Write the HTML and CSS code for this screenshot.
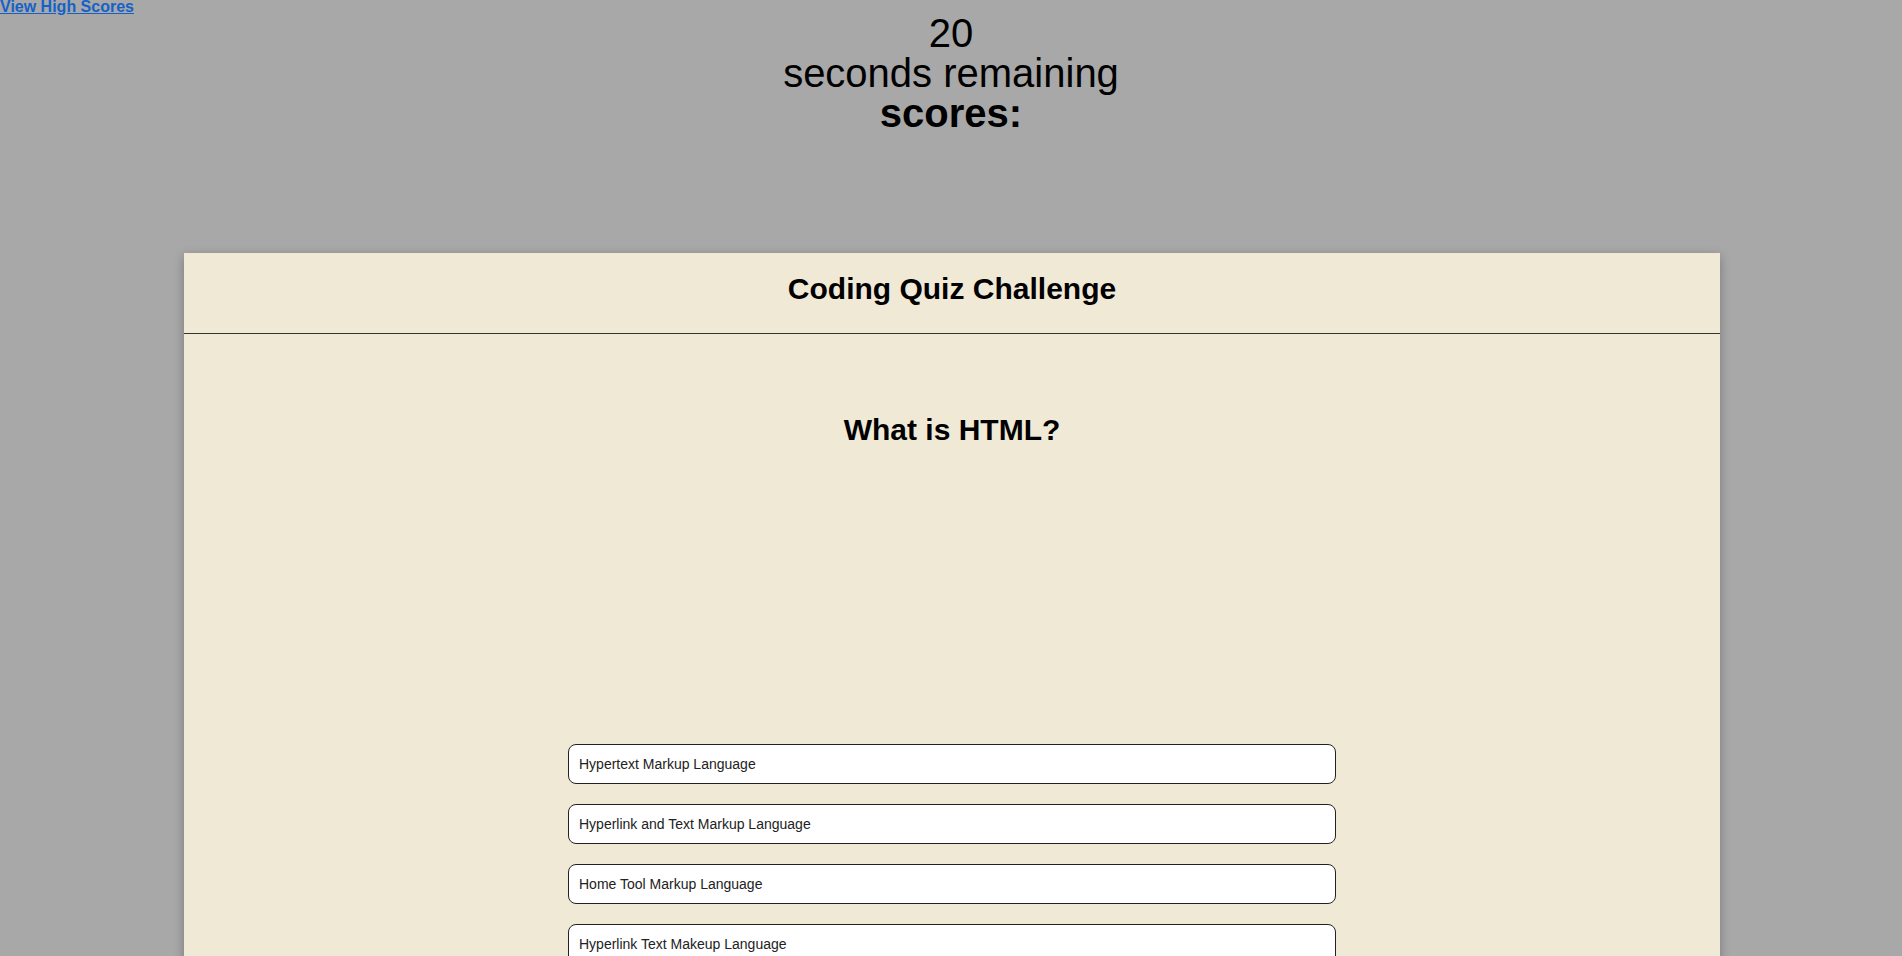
FILE: index.html
```html
<!DOCTYPE html>
<html>
<head>
<meta charset="utf-8">
<title>Coding Quiz Challenge</title>
<link rel="stylesheet" href="styles.css">
</head>
<body>
<header class="top">
  <a class="highscores" href="#">View High Scores</a>
  <div class="timer">
    <div class="time">20</div>
    <div class="label">seconds remaining</div>
    <div class="scores">scores:</div>
  </div>
</header>
<main class="card">
  <div class="card-head">
    <h1 class="title">Coding Quiz Challenge</h1>
  </div>
  <section class="quiz">
    <h2 class="question">What is HTML?</h2>
    <div class="answers">
      <button class="answer">Hypertext Markup Language</button>
      <button class="answer">Hyperlink and Text Markup Language</button>
      <button class="answer">Home Tool Markup Language</button>
      <button class="answer">Hyperlink Text Makeup Language</button>
    </div>
  </section>
</main>
</body>
</html>
```
FILE: styles.css
```css
html, body {
  margin: 0;
  padding: 0;
}
body {
  background: #a8a8a8;
  font-family: "Liberation Sans", Arial, sans-serif;
  color: #000;
}
.top {
  display: flex;
  flex-direction: column;
}
.highscores {
  display: block;
  align-self: flex-start;
  font-size: 16px;
  font-weight: bold;
  line-height: 14px;
  color: #1462c8;
  text-decoration: underline;
}
.timer {
  margin-top: -1px;
  text-align: center;
  font-size: 40px;
  line-height: 40px;
}
.scores {
  font-weight: bold;
}
.card {
  width: 1536px;
  margin: 120px 182px 0 184px;
  background: #f0e9d6;
  box-shadow: 0 3px 10px rgba(0, 0, 0, 0.28);
  padding-bottom: 120px;
}
.card-head {
  padding: 18px 0 27px;
  border-bottom: 1px solid #333;
}
.title {
  margin: 0;
  text-align: center;
  font-size: 30px;
  line-height: 35px;
  font-weight: bold;
}
.quiz {
  display: flex;
  flex-direction: column;
  align-items: center;
  padding-top: 78px;
}
.question {
  margin: 0;
  font-size: 30px;
  line-height: 35px;
  font-weight: bold;
}
.answers {
  width: 768px;
  margin-top: 297px;
  display: flex;
  flex-direction: column;
  gap: 20px;
}
.answer {
  display: block;
  width: 100%;
  height: 40px;
  padding: 0 10px;
  box-sizing: border-box;
  text-align: left;
  background: #fff;
  border: 1px solid #222;
  border-radius: 8px;
  font-family: "Liberation Sans", Arial, sans-serif;
  font-size: 14px;
  color: #222;
}
```
